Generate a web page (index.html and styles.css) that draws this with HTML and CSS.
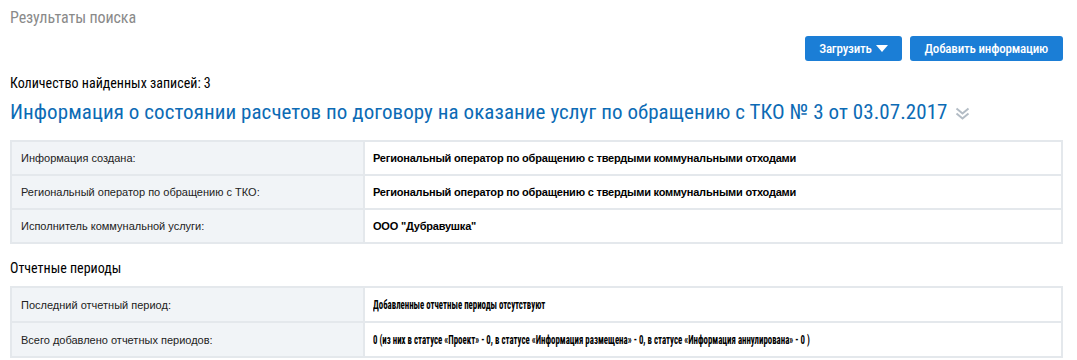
FILE: index.html
```html
<!DOCTYPE html>
<html lang="ru">
<head>
  <meta charset="UTF-8">
  <title>Результаты поиска</title>
  <link rel="stylesheet" href="styles.css">
</head>
<body>
<div class="page">
  <div class="page-title">Результаты поиска</div>
  <div class="toolbar">
    <button class="btn">Загрузить <span class="caret"></span></button>
    <button class="btn">Добавить информацию</button>
  </div>
  <div class="found">Количество найденных записей: 3</div>
  <h1 class="doc-title">Информация о состоянии расчетов по договору на оказание услуг по обращению с ТКО № 3 от 03.07.2017
    <svg class="more" width="15" height="13" viewBox="0 0 15 13"><path d="M1.5 1.5l6 5 6-5M1.5 6.5l6 5 6-5" fill="none" stroke="#b3bcc5" stroke-width="2"/></svg>
  </h1>

  <table class="info">
    <tr><td class="lbl">Информация создана:</td><td class="val">Региональный оператор по обращению с твердыми коммунальными отходами</td></tr>
    <tr><td class="lbl">Региональный оператор по обращению с ТКО:</td><td class="val">Региональный оператор по обращению с твердыми коммунальными отходами</td></tr>
    <tr><td class="lbl">Исполнитель коммунальной услуги:</td><td class="val">ООО "Дубравушка"</td></tr>
  </table>

  <div class="section">Отчетные периоды</div>
  <table class="info periods">
    <tr><td class="lbl">Последний отчетный период:</td><td class="val"><span class="narrow">Добавленные отчетные периоды отсутствуют</span></td></tr>
    <tr><td class="lbl">Всего добавлено отчетных периодов:</td><td class="val"><span class="narrow">0 (из них в статусе «Проект» - 0, в статусе «Информация размещена» - 0, в статусе «Информация аннулирована» - 0 )</span></td></tr>
  </table>
</div>
</body>
</html>
```
FILE: styles.css
```css
body{margin:0;padding:0;background:#fff;font-family:Roboto,"Liberation Sans",Arial,sans-serif;color:#000;}
.page{padding:9px 14px 0 10px;}
.page-title{font-size:16px;line-height:18px;color:#8a8a8a;letter-spacing:-0.1px;font-stretch:condensed;}
.toolbar{display:flex;justify-content:flex-end;gap:8px;margin-top:9px;}
.btn{height:25px;border:0;border-radius:3px;background:#1b7ed6;color:#fff;font:500 13px/25px Roboto,sans-serif;font-stretch:condensed;padding:0 15px;letter-spacing:-0.2px;cursor:pointer;}
.btn:first-child{padding:0 14px 0 14px;}
.caret{display:inline-block;width:0;height:0;border-left:6px solid transparent;border-right:6px solid transparent;border-top:7px solid #fff;vertical-align:1px;margin-left:1px;}
.found{font-size:14px;line-height:16px;margin-top:14px;font-stretch:condensed;}
.doc-title{margin:8px 0 0;font-size:21px;line-height:26px;font-weight:400;color:#0c6bb5;letter-spacing:0.07px;font-stretch:condensed;}
.doc-title .more{vertical-align:-1px;margin-left:3px;}
.info{width:100%;border-collapse:collapse;margin-top:15px;font-family:"Liberation Sans",Arial,sans-serif;font-size:11px;}
.info td{border:2px solid #e4e8ec;height:32px;padding:0 9px;}
.info .lbl{width:333px;background:#f1f4f7;color:#222;}
.info .val{font-weight:bold;letter-spacing:-0.2px;padding-left:8px;}
.periods td{height:33px;}
.narrow{display:inline-block;white-space:nowrap;font:bold 12px Roboto,sans-serif;font-stretch:condensed;letter-spacing:0;transform:scaleX(0.735);transform-origin:0 50%;}
.section{font-size:14px;line-height:18px;margin-top:15px;font-stretch:condensed;}
.section + .info{margin-top:9px;}
```
